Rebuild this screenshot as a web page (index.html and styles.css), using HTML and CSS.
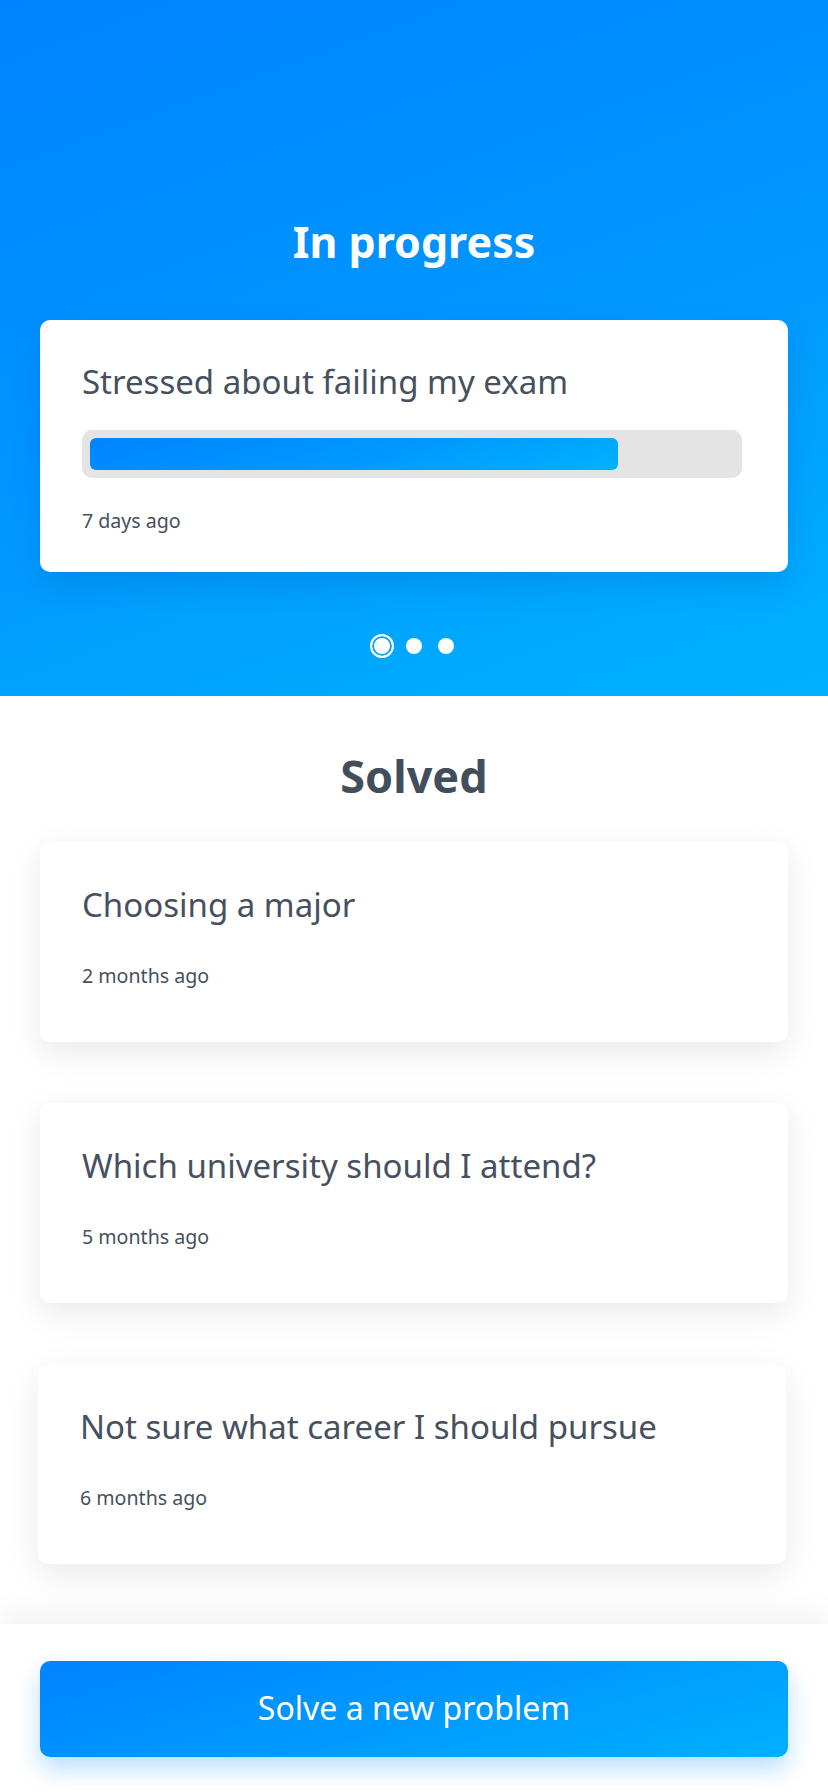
FILE: index.html
```html
<!DOCTYPE html>
<html>
<head>
<meta charset="utf-8">
<link rel="stylesheet" href="styles.css">
</head>
<body>
<div class="page">
  <header class="hero">
    <h1 class="hero-title">In progress</h1>
    <div class="card card-progress">
      <div class="card-title">Stressed about failing my exam</div>
      <div class="track"><div class="fill" style="width:82%"></div></div>
      <div class="card-date">7 days ago</div>
    </div>
    <div class="dots">
      <span class="dot-slot"><span class="dot dot-active"></span></span>
      <span class="dot-slot"><span class="dot"></span></span>
      <span class="dot-slot"><span class="dot"></span></span>
    </div>
  </header>
  <main class="solved">
    <h2 class="solved-title">Solved</h2>
    <div class="list">
      <div class="card card-solved">
        <div class="card-title">Choosing a major</div>
        <div class="card-date">2 months ago</div>
      </div>
      <div class="card card-solved">
        <div class="card-title">Which university should I attend?</div>
        <div class="card-date">5 months ago</div>
      </div>
      <div class="card card-solved card-shift">
        <div class="card-title">Not sure what career I should pursue</div>
        <div class="card-date">6 months ago</div>
      </div>
    </div>
  </main>
  <footer class="footer">
    <button class="cta">Solve a new problem</button>
  </footer>
</div>
</body>
</html>
```

FILE: styles.css
```css
* { box-sizing: border-box; }
html, body { margin: 0; padding: 0; }
body {
  font-family: "Noto Sans", "Open Sans", sans-serif;
  color: #46505e;
  background: #ffffff;
  width: 828px;
}
.page { display: flex; flex-direction: column; min-height: 1792px; }

.hero {
  background: linear-gradient(160deg, #0083ff 0%, #0096ff 50%, #00b2ff 100%);
  padding: 218px 40px 38px;
  display: flex;
  flex-direction: column;
  align-items: stretch;
}
.hero-title {
  margin: 0;
  text-align: center;
  color: #ffffff;
  font-size: 43px;
  line-height: 48px;
  font-weight: 700;
}
.card {
  background: #ffffff;
  border-radius: 10px;
}
.card-progress {
  margin-top: 54px;
  padding: 42px 46px 37px 42px;
  box-shadow: 0 12px 30px rgba(0, 60, 150, 0.18);
}
.card-title {
  font-size: 33px;
  line-height: 40px;
  color: #46505e;
  white-space: nowrap;
}
.card-date {
  font-size: 19.6px;
  line-height: 28px;
  color: #46505e;
}
.track {
  margin: 28px 0 29px;
  height: 48px;
  background: #e4e4e4;
  border-radius: 10px;
  padding: 8px;
}
.fill {
  height: 32px;
  border-radius: 6px;
  background: linear-gradient(165deg, #0083ff 0%, #0099ff 55%, #00b2ff 100%);
}
.dots {
  margin-top: 62px;
  height: 24px;
  display: flex;
  justify-content: center;
  align-items: center;
  gap: 8px;
}
.dot-slot {
  width: 24px;
  height: 24px;
  display: flex;
  align-items: center;
  justify-content: center;
}
.dot {
  width: 16px;
  height: 16px;
  border-radius: 50%;
  background: #ffffff;
}
.dot-active {
  width: 24px;
  height: 24px;
  background: #ffffff;
  border: 2px solid #ffffff;
  box-shadow: inset 0 0 0 2px #0aa0ff;
}

.solved {
  padding: 54px 40px 0;
  flex: 1;
}
.solved-title {
  margin: 0;
  text-align: center;
  font-size: 45px;
  line-height: 52px;
  font-weight: 700;
  color: #434e5c;
}
.list {
  margin-top: 40px;
  display: flex;
  flex-direction: column;
  gap: 61px;
  padding-bottom: 60px;
}
.card-solved {
  height: 200px;
  padding: 43px 42px 0;
  box-shadow: 0 10px 34px rgba(0, 0, 0, 0.09);
}
.card-solved .card-date { margin-top: 37px; }
.card-shift { margin-left: -2px; margin-right: 2px; }

.footer {
  background: #ffffff;
  padding: 37px 40px 36px;
  box-shadow: 0 -10px 30px rgba(0, 0, 0, 0.06);
  position: relative;
}
.cta {
  width: 100%;
  height: 96px;
  border: 0;
  border-radius: 10px;
  background: linear-gradient(165deg, #0083ff 0%, #0099ff 50%, #00b0ff 100%);
  color: #ffffff;
  font-family: "Noto Sans", "Open Sans", sans-serif;
  font-size: 32px;
  line-height: 40px;
  font-weight: 400;
  padding-bottom: 4px;
  box-shadow: 0 12px 24px rgba(0, 140, 255, 0.28);
  display: flex;
  align-items: center;
  justify-content: center;
}
```
